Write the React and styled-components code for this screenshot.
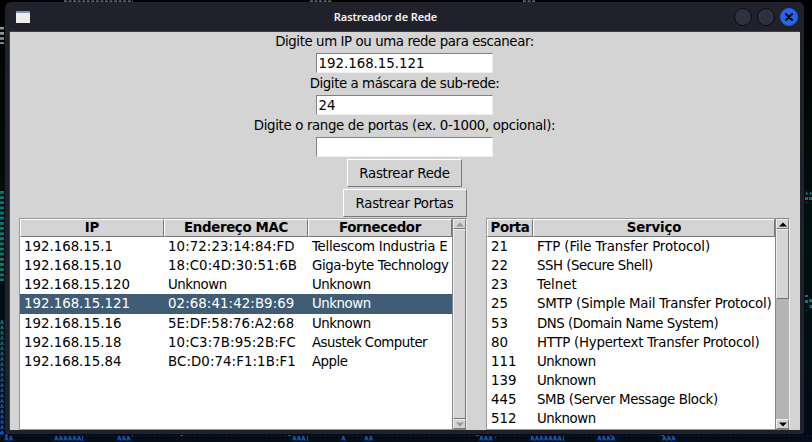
import React from "react";
import styled, { createGlobalStyle, css } from "styled-components";

const Global = createGlobalStyle`
  *{box-sizing:border-box}
  body{margin:0;background:#000407;overflow:hidden}
`;

const Desktop = styled.div`
  position: relative;
  width: 812px;
  height: 442px;
  padding: 2px 0 0 5px;
  overflow: hidden;
  background: #010507;
  font: 13.33px/19px "DejaVu Sans", sans-serif;
  color: #000;
`;
const Backdrop = styled.svg`
  position: absolute;
  inset: 0;
`;
const Window = styled.main`
  position: relative;
  width: 799px;
  height: 432px;
  padding: 0 4px 4px 5px;
  background: #20212a;
  border-radius: 6px 6px 3px 3px;
`;
const TitleBar = styled.header`
  height: 30px;
  display: grid;
  grid-template-columns: 60px 1fr 99px;
  align-items: center;
  text-align: center;
  color: #f2f2f2;
  font: 600 11px/28px "Noto Sans", sans-serif;
  letter-spacing: -0.1px;
`;
const WindowIcon = styled.svg`
  margin-left: 6px;
`;
const Controls = styled.div`
  display: flex;
  justify-content: flex-end;
  gap: 5px;
  padding-right: 1.6px;
`;
const Control = styled.span`
  width: 18px;
  height: 18px;
  border-radius: 50%;
  border: 1px solid ${(p) => (p.$close ? "#2460d8" : "#0b0c10")};
  background: ${(p) => (p.$close ? "#2367ec" : "#2f323d")};
  display: grid;
  place-items: center;
`;
const Content = styled.section`
  height: 398px;
  background: #d4d4d4;
  overflow: hidden;
  box-shadow: -1px -1px 0 #3d3e49;
`;
const Form = styled.form`
  display: flex;
  flex-direction: column;
  align-items: center;
  height: 186px;
  padding-right: 1px;
`;
const Label = styled.label`
  height: 21px;
  line-height: 20px;
  white-space: nowrap;
  letter-spacing: ${(p) => p.$track || 0}px;
`;
const Entry = styled.input`
  width: 177px;
  height: 20px;
  margin-bottom: 1px;
  padding: 0 1.5px;
  border: 1px solid;
  border-color: #828282 #eee #eee #828282;
  border-radius: 0;
  outline: 0;
  background: #fff;
  font: inherit;
`;
const Button = styled.button`
  width: ${(p) => p.$width}px;
  height: 28px;
  margin-top: ${(p) => p.$top}px;
  padding: 0;
  border: 1px solid;
  border-color: #fff #777 #777 #fff;
  background: #d4d4d4;
  font: inherit;
  letter-spacing: -0.29px;
  color: #000;
`;
const Tables = styled.div`
  display: flex;
  height: 212px;
  gap: 19px;
  padding-left: 9px;
`;
const Pane = styled.div`
  display: flex;
`;
const Table = styled.div`
  width: ${(p) => p.$width}px;
  border: 1px solid #999;
  border-right: 0;
  background: #fff;
  overflow: hidden;
`;
const Row = styled.div`
  display: grid;
  grid-template-columns: ${(p) => p.$columns};
  height: 19.15px;
  line-height: 20px;
  ${(p) =>
    p.$selected &&
    css`
      background: #415d76;
      color: #fff;
    `}
`;
const Header = styled(Row)`
  height: 18px;
  font-weight: 700;
  text-align: center;
`;
const HeadCell = styled.div`
  background: #d4d4d4;
  border: 1px solid;
  border-color: #fff #777 #777 #fff;
  line-height: 15px;
  letter-spacing: ${(p) => p.$track}px;
`;
const Cell = styled.div`
  padding-left: 4px;
  white-space: nowrap;
  letter-spacing: ${(p) => p.$track}px;
`;
const Scroll = styled.div`
  width: 15px;
  display: flex;
  flex-direction: column;
  border: 1px solid #858585;
  border-right-color: #eee;
  background: #b4b4b4;
`;
const Arrow = styled.div`
  height: 10px;
  flex: none;
  display: grid;
  place-items: center;
  background: #d4d4d4;
  border: 1px solid;
  border-color: #eee #777 #777 #eee;
`;
const Thumb = styled.div`
  flex: ${(p) => (p.$height ? `0 0 ${p.$height}px` : 1)};
  background: #d4d4d4;
  border: 1px solid;
  border-color: #eee #777 #777 #eee;
`;
const Trough = styled.div`
  flex: 1;
`;

const hosts = [
  ["192.168.15.1", "10:72:23:14:84:FD", "Tellescom Industria E"],
  ["192.168.15.10", "18:C0:4D:30:51:6B", "Giga-byte Technology"],
  ["192.168.15.120", "Unknown", "Unknown"],
  ["192.168.15.121", "02:68:41:42:B9:69", "Unknown"],
  ["192.168.15.16", "5E:DF:58:76:A2:68", "Unknown"],
  ["192.168.15.18", "10:C3:7B:95:2B:FC", "Asustek Computer"],
  ["192.168.15.84", "BC:D0:74:F1:1B:F1", "Apple"],
];
const ports = [
  ["21", "FTP (File Transfer Protocol)"],
  ["22", "SSH (Secure Shell)"],
  ["23", "Telnet"],
  ["25", "SMTP (Simple Mail Transfer Protocol)"],
  ["53", "DNS (Domain Name System)"],
  ["80", "HTTP (Hypertext Transfer Protocol)"],
  ["111", "Unknown"],
  ["139", "Unknown"],
  ["445", "SMB (Server Message Block)"],
  ["512", "Unknown"],
];

// Letter spacing of each caption, in pixels
const tracking = {
  "Tellescom Industria E": -0.26,
  "Giga-byte Technology": -0.38,
  Unknown: -0.45,
  "Asustek Computer": -0.5,
  Apple: -0.5,
  "FTP (File Transfer Protocol)": -0.12,
  "SSH (Secure Shell)": -0.47,
  "SMTP (Simple Mail Transfer Protocol)": -0.25,
  "DNS (Domain Name System)": -0.47,
  "HTTP (Hypertext Transfer Protocol)": -0.25,
  "SMB (Server Message Block)": -0.37,
  "Endereço MAC": -0.33,
  Fornecedor: -0.3,
  Porta: -0.4,
  Serviço: -0.15,
};
const trackOf = (text) => tracking[text] ?? (text.includes(":") ? 0.09 : 0);

function DataTable({ width, columns, heads, rows, selected }) {
  return (
    <Table $width={width}>
      <Header $columns={columns}>
        {heads.map((h) => <HeadCell key={h} $track={trackOf(h)}>{h}</HeadCell>)}
      </Header>
      {rows.map((row) => (
        <Row key={row[0]} $columns={columns} $selected={row[0] === selected}>
          {row.map((c, i) => <Cell key={i} $track={trackOf(c)}>{c}</Cell>)}
        </Row>
      ))}
    </Table>
  );
}

function ScrollBar({ disabled, thumb }) {
  const fill = disabled ? "#999" : "#000";
  return (
    <Scroll>
      <Arrow><svg width="8" height="5"><path d="M0 4.5 4 .5 8 4.5Z" fill={fill} /></svg></Arrow>
      <Thumb $height={thumb} />
      {thumb && <Trough />}
      <Arrow><svg width="8" height="5"><path d="M0 .5 4 4.5 8 .5Z" fill={fill} /></svg></Arrow>
    </Scroll>
  );
}

// Runs of small marks along the bottom edge: [x, count]
const bottomMarks = [[5, 2], [55, 6], [118, 3], [293, 3], [342, 1], [365, 2], [480, 3], [531, 7], [598, 4], [663, 3]];
const bottomTicks = [[82, 436, 1, 5], [307, 436, 1, 5], [563, 436, 1, 5], [132, 435, 1, 1], [180, 435, 3, 1], [288, 435, 3, 1], [476, 435, 3, 1], [661, 435, 3, 1], [495, 437, 1, 1], [610, 435, 2, 1]];

function Wallpaper() {
  return (
    <Backdrop width="812" height="442">
      <defs>
        <linearGradient id="sea" x1="0" y1="320" x2="0" y2="436" gradientUnits="userSpaceOnUse">
          <stop offset="0" stopColor="#087078" />
          <stop offset="0.5" stopColor="#0a5489" />
          <stop offset="1" stopColor="#1450b5" />
        </linearGradient>
        <linearGradient id="edge" x1="0" y1="0" x2="0" y2="1">
          <stop offset="0" stopColor="#000" />
          <stop offset="0.5" stopColor="#00100f" />
          <stop offset="1" stopColor="#020b18" />
        </linearGradient>
      </defs>
      <path d="M0 0h812v442H0z" fill="url(#edge)" />
      <g fill="none">
        <path d="M64 1.2H133M310 1.2H332M523 1.2H535" stroke="#858790" strokeWidth="1.2" strokeDasharray="3 1.55" />
        <path d="M2 27V44" stroke="#8b94a2" strokeWidth="4" strokeDasharray="2.6 2.5" />
        <path d="M2 191V281" stroke="#08777b" strokeWidth="4" strokeDasharray="2.8 2.35" />
        <path d="M0 436H812" stroke="#04131f" strokeWidth="2" strokeDasharray="3 1.5" />
        <path d="M0 440H812" stroke="#04131f" strokeWidth="2" strokeDasharray="3 1.5" />
      </g>
      <g fill="url(#sea)">
        {Array.from({ length: 22 }, (_, i) => {
          const y = 320 + i * 5.25;
          return <path key={i} d={`M1.5 ${y}h1l1.7 4h-1.6l-.6-1-.6 1H0Z`} />;
        })}
      </g>
      <g fill="#1551ae">
        {bottomMarks.flatMap(([x, count]) =>
          Array.from({ length: count }, (_, i) => (
            <path key={`${x}-${i}`} d={`M${x + i * 4.55} 436h2l1.8 4.6h-1.5l-1-1.4-1 1.4h-1.3l1.2-3Z`} />
          ))
        )}
        {bottomTicks.map(([x, y, w, h]) => <rect key={x} x={x} y={y} width={w} height={h} />)}
        <path d="M0 432h3.5v2.5H0ZM5 434.5h3v1.5H5Z" />
      </g>
      <path
        fill="#087580"
        d="M806.5 191l1.7 3.5h-3ZM810.5 191l1.7 3.5h-3ZM805 197h3v3h-3ZM809 197h3v3h-3ZM806 202h1v1h-1ZM805 295h3v2h-3ZM805 300h3v3h-3ZM809 299h3v3h-3ZM809.500 305h2.500v3h-2.500ZM806 310h1v1h-1Z"
      />
    </Backdrop>
  );
}

export default function App() {
  return (
    <Desktop>
      <Global />
      <Wallpaper />
      <Window>
        <TitleBar>
          <WindowIcon width="14" height="12"><path fill="#ecece8" d="M0 0h14v12H0z" /><path fill="#7897bd" d="M0 0h14v2H0z" /></WindowIcon>
          <span>Rastreador de Rede</span>
          <Controls><Control /><Control /><Control $close><svg width="8" height="8"><path d="m1 1 6 6M7 1 1 7" stroke="#020713" strokeWidth="2.2" strokeLinecap="round" /></svg></Control></Controls>
        </TitleBar>
        <Content>
          <Form>
            <Label $track={-0.4}>Digite um IP ou uma rede para escanear:</Label>
            <Entry defaultValue="192.168.15.121" />
            <Label $track={-0.42}>Digite a máscara de sub-rede:</Label>
            <Entry defaultValue="24" />
            <Label $track={-0.34}>Digite o range de portas (ex. 0-1000, opcional):</Label>
            <Entry />
            <Button type="button" $width={115} $top={1}>Rastrear Rede</Button>
            <Button type="button" $width={124} $top={2}>Rastrear Portas</Button>
          </Form>
          <Tables>
            <Pane>
              <DataTable width={433} columns="144px 144px 144px" heads={["IP", "Endereço MAC", "Fornecedor"]} rows={hosts} selected="192.168.15.121" />
              <ScrollBar disabled />
            </Pane>
            <Pane>
              <DataTable width={289} columns="46px 242px" heads={["Porta", "Serviço"]} rows={ports} />
              <ScrollBar thumb={70} />
            </Pane>
          </Tables>
        </Content>
      </Window>
    </Desktop>
  );
}
